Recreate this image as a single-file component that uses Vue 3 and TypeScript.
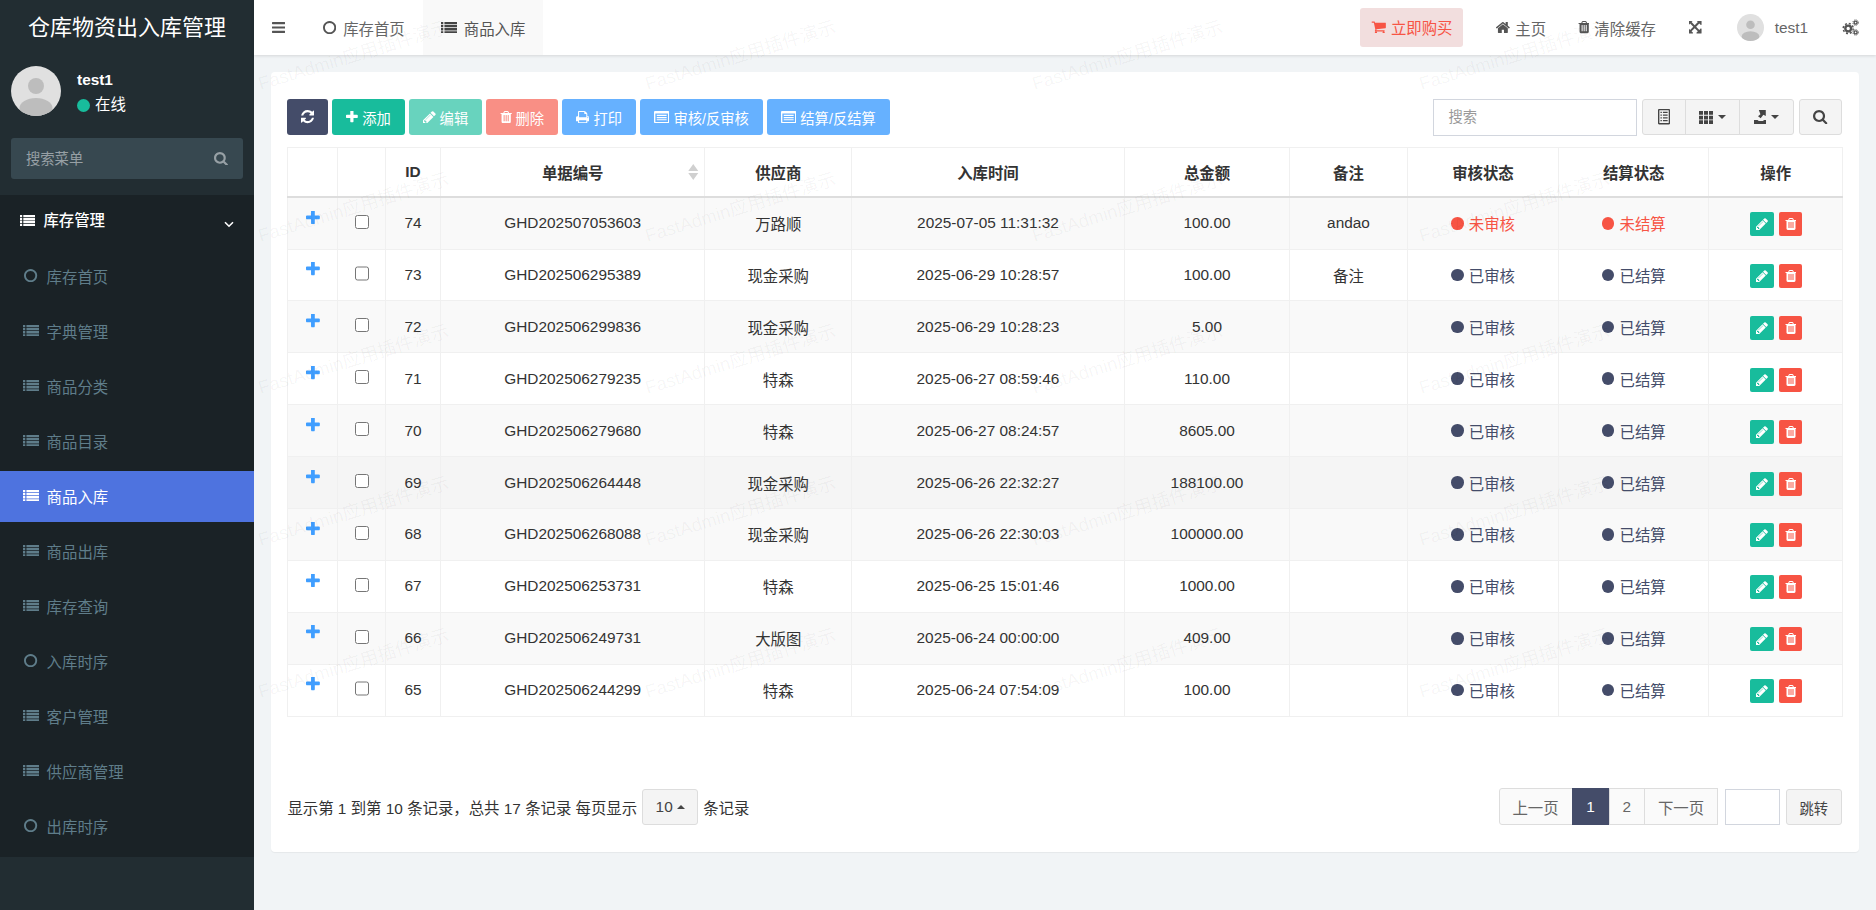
<script setup lang="ts">
import { h } from "vue";

type IconDef = { vb: [number, number, number, number]; d: string };

const ICONS: Record<string, IconDef> = {
  bars: { vb: [128, 256, 1536, 1280], d: "M1664 1344v128q0 26-19 45t-45 19h-1408q-26 0-45-19t-19-45v-128q0-26 19-45t45-19h1408q26 0 45 19t19 45zm0-512v128q0 26-19 45t-45 19h-1408q-26 0-45-19t-19-45v-128q0-26 19-45t45-19h1408q26 0 45 19t19 45zm0-512v128q0 26-19 45t-45 19h-1408q-26 0-45-19t-19-45v-128q0-26 19-45t45-19h1408q26 0 45 19t19 45z" },
  circle: { vb: [128, 128, 1536, 1536], d: "M896 352q-148 0-273 73t-198 198-73 273 73 273 198 198 273 73 273-73 198-198 73-273-73-273-198-198-273-73zm768 544q0 209-103 385.5t-279.5 279.5-385.5 103-385.5-103-279.5-279.5-103-385.5 103-385.5 279.5-279.5 385.5-103 385.5 103 279.5 279.5 103 385.5z" },
  list: { vb: [0, 256, 1792, 1280], d: "M0 256h256v256H0zM384 256h1408v256H384zM0 597h256v256H0zM384 597h1408v256H384zM0 939h256v256H0zM384 939h1408v256H384zM0 1280h256v256H0zM384 1280h1408v256H384z" },
  plus: { vb: [192, 192, 1408, 1408], d: "M1600 736v192q0 40-28 68t-68 28h-416v416q0 40-28 68t-68 28h-192q-40 0-68-28t-28-68v-416h-416q-40 0-68-28t-28-68v-192q0-40 28-68t68-28h416v-416q0-40 28-68t68-28h192q40 0 68 28t28 68v416h416q40 0 68 28t28 68z" },
  trash: { vb: [128, 128, 1408, 1536], d: "M704 1376v-704q0-14-9-23t-23-9h-64q-14 0-23 9t-9 23v704q0 14 9 23t23 9h64q14 0 23-9t9-23zm256 0v-704q0-14-9-23t-23-9h-64q-14 0-23 9t-9 23v704q0 14 9 23t23 9h64q14 0 23-9t9-23zm256 0v-704q0-14-9-23t-23-9h-64q-14 0-23 9t-9 23v704q0 14 9 23t23 9h64q14 0 23-9t9-23zm-544-992h448l-48-117q-7-9-17-11h-317q-10 2-17 11zm928 32v64q0 14-9 23t-23 9h-96v948q0 83-47 143.5t-113 60.5h-832q-66 0-113-58.5t-47-141.5v-952h-96q-14 0-23-9t-9-23v-64q0-14 9-23t23-9h309l70-167q15-37 54-63t79-26h320q40 0 79 26t54 63l70 167h309q14 0 23 9t9 23z" },
  pencil: { vb: [128, 128, 1536, 1536], d: "M491 1536l91-91-235-235-91 91v107h128v128h107zm523-928q0-22-22-22-10 0-17 7l-542 542q-7 7-7 17 0 22 22 22 10 0 17-7l542-542q7-7 7-17zm-54-192l416 416-832 832h-416v-416zm683 96q0 53-37 90l-166 166-416-416 166-165q36-38 90-38 53 0 91 38l235 234q37 39 37 91z" },
  search: { vb: [64, 128, 1664, 1664], d: "M1216 832q0-185-131.5-316.5t-316.5-131.5-316.5 131.5-131.5 316.5 131.5 316.5 316.5 131.5 316.5-131.5 131.5-316.5zm512 832q0 52-38 90t-90 38q-54 0-90-38l-343-342q-179 124-399 124-143 0-273.5-55.5t-225-150-150-225-55.5-273.5 55.5-273.5 150-225 225-150 273.5-55.5 273.5 55.5 225 150 150 225 55.5 273.5q0 220-124 399l343 343q37 37 37 90z" },
  refresh: { vb: [128, 128, 1536, 1536], d: "M1639 1056q0 5-1 7-64 268-268 434.5t-478 166.5q-146 0-282.5-55t-243.5-157l-129 129q-19 19-45 19t-45-19-19-45v-448q0-26 19-45t45-19h448q26 0 45 19t19 45-19 45l-137 137q71 66 161 102t187 36q134 0 250-65t186-179q11-17 53-117 8-23 30-23h192q13 0 22.5 9.5t9.5 22.5zm25-800v448q0 26-19 45t-45 19h-448q-26 0-45-19t-19-45 19-45l138-138q-148-137-349-137-134 0-250 65t-186 179q-11 17-53 117-8 23-30 23h-199q-13 0-22.5-9.5t-9.5-22.5v-7q65-268 270-434.5t480-166.5q146 0 284 55.5t245 156.5l130-129q19-19 45-19t45 19 19 45z" },
  print: { vb: [64, 128, 1664, 1536], d: "M448 1536h896v-256h-896v256zm0-640h896v-384h-160q-40 0-68-28t-28-68v-160h-640v640zm1152 64q0-26-19-45t-45-19-45 19-19 45 19 45 45 19 45-19 19-45zm128 0v416q0 13-9.5 22.5t-22.5 9.5h-224v160q0 40-28 68t-68 28h-960q-40 0-68-28t-28-68v-160h-224q-13 0-22.5-9.5t-9.5-22.5v-416q0-79 56.5-135.5t135.5-56.5h64v-544q0-40 28-68t68-28h672q40 0 88 20t76 48l152 152q28 28 48 76t20 88v256h64q79 0 135.5 56.5t56.5 135.5z" },
  cart: { vb: [0, 192, 1728, 1472], d: "M704 1536q0 52-38 90t-90 38-90-38-38-90 38-90 90-38 90 38 38 90zm896 0q0 52-38 90t-90 38-90-38-38-90 38-90 90-38 90 38 38 90zm128-1088v512q0 24-16.5 42.5t-40.5 21.5l-1044 122q13 60 13 70 0 16-24 64h920q26 0 45 19t19 45-19 45-45 19h-1024q-26 0-45-19t-19-45q0-11 8-31.5t16-36 21.5-40 15.5-29.5l-177-823h-204q-26 0-45-19t-19-45 19-45 45-19h256q16 0 28.5 6.5t19.5 15.5 13 24.5 8 26 5.5 29.5 4.5 26h1201q26 0 45 19t19 45z" },
  home: { vb: [96, 256, 1600, 1280], d: "M1472 992v480q0 26-19 45t-45 19h-384v-384h-256v384h-384q-26 0-45-19t-19-45v-480q0-1 .5-3t.5-3l575-474 575 474q1 2 1 6zm223-69l-62 74q-8 9-21 11h-3q-13 0-21-7l-692-577-692 577q-12 8-24 7-13-2-21-11l-62-74q-8-10-7-23.5t11-21.5l719-599q32-26 76-26t76 26l244 204v-195q0-14 9-23t23-9h192q14 0 23 9t9 23v408l219 182q10 8 11 21.5t-7 23.5z" },
  expand: { vb: [128, 128, 1536, 1536], d: "M1283 413l-355 355 355 355 144-144q29-31 70-14 39 17 39 59v448q0 26-19 45t-45 19h-448q-42 0-59-40-17-39 14-69l144-144-355-355-355 355 144 144q31 30 14 69-17 40-59 40h-448q-26 0-45-19t-19-45v-448q0-42 40-59 39-17 69 14l144 144 355-355-355-355-144 144q-19 19-45 19-12 0-24-5-40-17-40-59v-448q0-26 19-45t45-19h448q42 0 59 40 17 39-14 69l-144 144 355 355 355-355-144-144q-31-30-14-69 17-40 59-40h448q26 0 45 19t19 45v448q0 42-39 59-13 5-25 5-26 0-45-19z" },
  listAlt: { vb: [0, 192, 1792, 1408], d: "M128 192h1536q53 0 90.5 37.5t37.5 90.5v1152q0 53-37.5 90.5t-90.5 37.5H128q-53 0-90.5-37.5T0 1472V320q0-53 37.5-90.5T128 192zM160 480v960q0 13 9.5 22.5t22.5 9.5h1408q13 0 22.5-9.5t9.5-22.5V480zM320 640h1152v128H320zM320 896h1152v128H320zM320 1152h1152v128H320z" },
  sheet: { vb: [192, 0, 1408, 1792], d: "M320 0h1152q53 0 90.5 37.5t37.5 90.5v1536q0 53-37.5 90.5t-90.5 37.5H320q-53 0-90.5-37.5T192 1664V128q0-53 37.5-90.5T320 0zM352 160v1472h1088V160zM480 320h160v160H480zM768 320h544v160H768zM480 640h160v160H480zM768 640h544v160H768zM480 960h160v160H480zM768 960h544v160H768zM480 1280h160v160H480zM768 1280h544v160H768z" },
  th: { vb: [0, 0, 1792, 1664], d: "M0 0h512v480H0zM640 0h512v480H640zM1280 0h512v480h-512zM0 592h512v480H0zM640 592h512v480H640zM1280 592h512v480h-512zM0 1184h512v480H0zM640 1184h512v480H640zM1280 1184h512v480h-512z" },
  exportBox: { vb: [128, 0, 1536, 1664], d: "M704 0h832v704l-288-128-320 416-320-240 288-256zM128 1184h416l160 128h480l160-128h320v480H128z" },
};

const Icon = (props: { name: string; size?: number }) => {
  const def = ICONS[props.name];
  const s = props.size ?? 15;
  return h(
    "svg",
    {
      viewBox: def.vb.join(" "),
      fill: "currentColor",
      "fill-rule": "evenodd",
      style: { width: `${(def.vb[2] / 1792) * s}px`, height: `${(def.vb[3] / 1792) * s}px`, flexShrink: 0 },
    },
    [h("path", { d: def.d })],
  );
};
Icon.props = ["name", "size"];

const menu = [
  { label: "库存首页", icon: "circle" },
  { label: "字典管理", icon: "list" },
  { label: "商品分类", icon: "list" },
  { label: "商品目录", icon: "list" },
  { label: "商品入库", icon: "list", active: true },
  { label: "商品出库", icon: "list" },
  { label: "库存查询", icon: "list" },
  { label: "入库时序", icon: "circle" },
  { label: "客户管理", icon: "list" },
  { label: "供应商管理", icon: "list" },
  { label: "出库时序", icon: "circle" },
];

const rows = [
  { id: 74, no: "GHD202507053603", vendor: "万路顺", time: "2025-07-05 11:31:32", total: "100.00", note: "andao", done: false },
  { id: 73, no: "GHD202506295389", vendor: "现金采购", time: "2025-06-29 10:28:57", total: "100.00", note: "备注", done: true },
  { id: 72, no: "GHD202506299836", vendor: "现金采购", time: "2025-06-29 10:28:23", total: "5.00", note: "", done: true },
  { id: 71, no: "GHD202506279235", vendor: "特森", time: "2025-06-27 08:59:46", total: "110.00", note: "", done: true },
  { id: 70, no: "GHD202506279680", vendor: "特森", time: "2025-06-27 08:24:57", total: "8605.00", note: "", done: true },
  { id: 69, no: "GHD202506264448", vendor: "现金采购", time: "2025-06-26 22:32:27", total: "188100.00", note: "", done: true, hover: true },
  { id: 68, no: "GHD202506268088", vendor: "现金采购", time: "2025-06-26 22:30:03", total: "100000.00", note: "", done: true },
  { id: 67, no: "GHD202506253731", vendor: "特森", time: "2025-06-25 15:01:46", total: "1000.00", note: "", done: true },
  { id: 66, no: "GHD202506249731", vendor: "大版图", time: "2025-06-24 00:00:00", total: "409.00", note: "", done: true },
  { id: 65, no: "GHD202506244299", vendor: "特森", time: "2025-06-24 07:54:09", total: "100.00", note: "", done: true },
];

const columns = [50, 47.6, 55, 264.5, 146.5, 273, 165, 118, 151, 150.5, 133.5];

// watermark tiles repeat over the content frame
const marks: { x: number; y: number }[] = [];
for (let r = 0; r < 5; r++) {
  for (let c = 0; c < 4; c++) {
    marks.push({ x: 8 + c * 387, y: 73 + r * 152 });
  }
}
</script>

<template>
  <div class="layout">
    <aside class="sidebar">
      <div class="logo">仓库物资出入库管理</div>
      <div class="user-panel">
        <svg class="avatar-big" viewBox="0 0 100 100">
          <defs>
            <clipPath id="avatar-clip"><circle cx="50" cy="50" r="50" /></clipPath>
          </defs>
          <g clip-path="url(#avatar-clip)">
            <rect width="100" height="100" fill="#e0e0e0" />
            <circle cx="50" cy="40" r="16" fill="#bdbdbd" />
            <ellipse cx="50" cy="84" rx="33" ry="20" fill="#bdbdbd" />
          </g>
        </svg>
        <div class="user-info">
          <div class="user-name">test1</div>
          <div class="user-status"><span class="dot"></span>在线</div>
        </div>
      </div>
      <div class="side-search">
        <input type="text" placeholder="搜索菜单" />
        <Icon name="search" :size="15" />
      </div>
      <nav class="menu">
        <div class="menu-head">
          <Icon name="list" :size="15.4" />
          <span class="menu-head-text">库存管理</span>
          <svg class="chevron" viewBox="0 0 10 7"><path d="M1 1.2 5 5.2 9 1.2" fill="none" stroke="currentColor" stroke-width="1.6" /></svg>
        </div>
        <a v-for="item in menu" :key="item.label" class="menu-item" :class="{ active: item.active }">
          <span class="menu-icon"><Icon :name="item.icon" :size="item.icon === 'list' ? 16 : 15.4" /></span>
          {{ item.label }}
        </a>
      </nav>
    </aside>

    <div class="main">
      <header class="topbar">
        <div class="toggle"><Icon name="bars" :size="15.4" /></div>
        <div class="tab"><Icon name="circle" :size="15.4" />库存首页</div>
        <div class="tab tab-active"><Icon name="list" :size="16" />商品入库</div>
        <div class="top-right">
          <div class="buy"><Icon name="cart" :size="15.4" />立即购买</div>
          <div class="top-link link-home"><Icon name="home" :size="15.4" />主页</div>
          <div class="top-link link-clear"><Icon name="trash" :size="14.4" />清除缓存</div>
          <div class="top-link link-full"><Icon name="expand" :size="16" /></div>
          <svg class="avatar-small" viewBox="0 0 100 100">
            <g clip-path="url(#avatar-clip)">
              <rect width="100" height="100" fill="#e0e0e0" />
              <circle cx="50" cy="40" r="16" fill="#bdbdbd" />
              <ellipse cx="50" cy="84" rx="33" ry="20" fill="#bdbdbd" />
            </g>
          </svg>
          <span class="top-user">test1</span>
          <svg class="gears" viewBox="0 0 17 17" fill="none" stroke="currentColor">
            <circle cx="6.2" cy="9.5" r="2.9" stroke-width="2.4" />
            <circle cx="6.2" cy="9.5" r="5" stroke-width="1.5" stroke-dasharray="2 1.93" />
            <circle cx="13.6" cy="3.6" r="1.5" stroke-width="1.4" />
            <circle cx="13.6" cy="3.6" r="2.7" stroke-width="1" stroke-dasharray="1.2 1" />
            <circle cx="13.6" cy="13.4" r="1.5" stroke-width="1.4" />
            <circle cx="13.6" cy="13.4" r="2.7" stroke-width="1" stroke-dasharray="1.2 1" />
          </svg>
        </div>
      </header>

      <div class="content">
        <section class="card">
          <div class="toolbar">
            <button class="btn btn-primary btn-refresh"><Icon name="refresh" :size="15.4" /></button>
            <button class="btn btn-success"><Icon name="plus" :size="15" />添加</button>
            <button class="btn btn-success btn-off"><Icon name="pencil" :size="15" />编辑</button>
            <button class="btn btn-danger btn-off"><Icon name="trash" :size="14.4" />删除</button>
            <button class="btn btn-info"><Icon name="print" :size="14.4" />打印</button>
            <button class="btn btn-info"><Icon name="listAlt" :size="15.4" />审核/反审核</button>
            <button class="btn btn-info"><Icon name="listAlt" :size="15.4" />结算/反结算</button>
            <div class="tools-right">
              <input class="search-input" type="text" placeholder="搜索" />
              <div class="btn-group">
                <button class="tool tool-a"><Icon name="sheet" :size="15.4" /></button>
                <button class="tool tool-b"><Icon name="th" :size="14" /><i class="caret"></i></button>
                <button class="tool tool-b"><Icon name="exportBox" :size="15" /><i class="caret"></i></button>
              </div>
              <button class="tool tool-search"><Icon name="search" :size="15.4" /></button>
            </div>
          </div>

          <table class="grid">
            <colgroup>
              <col v-for="(w, i) in columns" :key="i" :style="{ width: w + 'px' }" />
            </colgroup>
            <thead>
              <tr>
                <th></th>
                <th></th>
                <th>ID</th>
                <th class="sortable">
                  单据编号
                  <svg class="sort" viewBox="0 0 10 16"><path d="M5 0 10 7H0zM5 16 0 9h10z" /></svg>
                </th>
                <th>供应商</th>
                <th>入库时间</th>
                <th>总金额</th>
                <th>备注</th>
                <th>审核状态</th>
                <th>结算状态</th>
                <th>操作</th>
              </tr>
            </thead>
            <tbody>
              <tr v-for="(row, i) in rows" :key="row.id" :class="{ odd: i % 2 === 0, hovered: row.hover }">
                <td class="cell-plus"><span class="plus"><Icon name="plus" :size="17.6" /></span></td>
                <td class="cell-check"><input type="checkbox" /></td>
                <td>{{ row.id }}</td>
                <td>{{ row.no }}</td>
                <td>{{ row.vendor }}</td>
                <td>{{ row.time }}</td>
                <td>{{ row.total }}</td>
                <td>{{ row.note }}</td>
                <td>
                  <span class="state" :class="{ pending: !row.done }"><i></i>{{ row.done ? "已审核" : "未审核" }}</span>
                </td>
                <td>
                  <span class="state" :class="{ pending: !row.done }"><i></i>{{ row.done ? "已结算" : "未结算" }}</span>
                </td>
                <td>
                  <div class="ops">
                    <span class="op op-edit"><Icon name="pencil" :size="14" /></span>
                    <span class="op op-del"><Icon name="trash" :size="14" /></span>
                  </div>
                </td>
              </tr>
            </tbody>
          </table>

          <div class="pager-bar">
            <div class="pager-info">
              <span>显示第 1 到第 10 条记录，总共 17 条记录 每页显示</span>
              <span class="page-size">10<i class="caret-up"></i></span>
              <span>条记录</span>
            </div>
            <div class="pager-right">
              <div class="pages">
                <a class="page page-wide">上一页</a>
                <a class="page page-on">1</a>
                <a class="page page-num">2</a>
                <a class="page page-wide">下一页</a>
              </div>
              <input class="jump-input" type="text" />
              <button class="jump-btn">跳转</button>
            </div>
          </div>
        </section>
      </div>

      <div class="marks">
        <span v-for="(m, i) in marks" :key="i" class="mark" :style="{ left: m.x + 'px', top: m.y + 'px' }">FastAdmin应用插件演示</span>
      </div>
    </div>
  </div>
</template>

<style>
html,
body {
  margin: 0;
  height: 100%;
  background: #f1f4f6;
}
</style>

<style scoped>
.layout {
  display: flex;
  height: 100vh;
  overflow: hidden;
  font-family: "Liberation Sans", "Noto Sans CJK SC", sans-serif;
  font-size: 15.4px;
  color: #333;
}

/* sidebar */
.sidebar {
  width: 254px;
  flex-shrink: 0;
  display: flex;
  flex-direction: column;
  background: #222d32;
}

.logo {
  height: 55px;
  line-height: 55px;
  text-align: center;
  color: #fff;
  font-size: 22px;
}

.user-panel {
  display: flex;
  padding: 11px 11px 0;
  height: 72px;
}

.avatar-big {
  width: 50px;
  height: 50px;
}

.user-info {
  margin-left: 16px;
  color: #fff;
}

.user-name {
  font-weight: 700;
  line-height: 20px;
  margin-top: 4px;
}

.user-status {
  display: flex;
  align-items: center;
  line-height: 20px;
  margin-top: 5px;
}

.dot {
  width: 13px;
  height: 13px;
  border-radius: 50%;
  background: #18bc9c;
  margin-right: 5px;
}

.side-search {
  margin: 0 11px;
  height: 41px;
  border-radius: 3px;
  background: #374850;
  display: flex;
  align-items: center;
  padding: 0 15px;
  color: #97a0a5;
}

.side-search input {
  flex: 1;
  min-width: 0;
  border: 0;
  outline: 0;
  background: transparent;
  font: inherit;
  font-size: 14.3px;
  padding: 0;
  color: #ccc;
}

.side-search input::placeholder {
  color: #97a0a5;
  opacity: 1;
}

.menu {
  margin-top: 16px;
  background: #1a2226;
  height: 662px;
}

.menu-head {
  height: 56px;
  display: flex;
  align-items: flex-start;
  padding: 17px 0 0 20px;
  box-sizing: border-box;
  color: #fff;
  line-height: 18px;
  font-weight: 500;
}

.menu-head svg:first-child {
  margin-top: 3px;
}

.menu-head-text {
  margin-left: 8px;
}

.chevron {
  position: absolute;
  left: 224px;
  top: 221px;
  width: 10px;
  height: 7px;
  color: #fff;
}

.menu-item {
  display: flex;
  align-items: center;
  height: 51px;
  box-sizing: border-box;
  padding-bottom: 2px;
  margin-bottom: 4px;
  padding-left: 20px;
  color: #5f7d8a;
}

.menu-item.active {
  background: #4e73df;
  color: #fff;
}

.menu-icon {
  width: 22px;
  margin-right: 4.6px;
  display: inline-flex;
  justify-content: center;
}

/* top bar */
.main {
  flex: 1;
  min-width: 0;
  display: flex;
  flex-direction: column;
  position: relative;
}

.topbar {
  height: 55px;
  flex-shrink: 0;
  display: flex;
  align-items: center;
  background: #fff;
  color: #666;
  box-shadow: 0 1px 3px rgba(0, 0, 0, 0.12);
  position: relative;
}

.toggle {
  width: 51px;
  padding-left: 18px;
  box-sizing: border-box;
  color: #555;
  display: flex;
}

.tab {
  height: 55px;
  display: flex;
  align-items: center;
  gap: 7px;
  padding: 0 18px;
}

.tab svg {
  color: #555;
}

.tab-active {
  background: #f9f9f9;
  color: #555;
}

.tab-active svg {
  color: #444;
}

.top-right {
  margin-left: auto;
  display: flex;
  align-items: center;
  padding-right: 17px;
}

.buy {
  display: flex;
  align-items: center;
  gap: 5px;
  height: 39px;
  padding: 0 11px;
  margin-top: -1px;
  border-radius: 3px;
  background: #f2dede;
  color: #f75444;
}

.top-link {
  display: flex;
  align-items: center;
  gap: 5px;
  color: #666;
}

.top-link svg {
  color: #555;
}

.link-home {
  margin-left: 33px;
}

.link-clear {
  margin-left: 32px;
}

.link-full {
  margin-left: 33px;
}

.avatar-small {
  width: 27px;
  height: 27px;
  margin-left: 34px;
}

.top-user {
  margin-left: 11px;
  color: #666;
}

.gears {
  width: 17px;
  height: 17px;
  margin-left: 34px;
  color: #555;
}

/* page body */
.content {
  flex: 1;
  padding: 17px 17.5px 0 17px;
  min-height: 0;
}

.card {
  height: 780px;
  box-sizing: border-box;
  padding: 27px 16.5px 27px 16.4px;
  background: #fff;
  border-radius: 4px;
  box-shadow: 0 1px 1px rgba(0, 0, 0, 0.05);
  display: flex;
  flex-direction: column;
}

.toolbar {
  display: flex;
  align-items: center;
  gap: 4px;
  height: 36px;
  margin-bottom: 12px;
}

.btn {
  display: inline-flex;
  align-items: center;
  gap: 4px;
  height: 36px;
  padding: 0 14px;
  border: 0;
  border-radius: 3px;
  color: #fff;
  font: inherit;
  font-size: 14.3px;
}

.btn-primary {
  background: #444c69;
}

.btn-refresh {
  width: 41px;
  justify-content: center;
  padding: 0;
}

.btn-success {
  background: #18bc9c;
}

.btn-danger {
  background: #f75444;
}

.btn-off {
  opacity: 0.65;
}

.btn-info {
  background: #66b1ff;
}

.tools-right {
  margin-left: auto;
  display: flex;
  align-items: center;
  gap: 5px;
}

.search-input {
  width: 204px;
  height: 37px;
  box-sizing: border-box;
  border: 1px solid #d2d6de;
  outline: 0;
  padding: 0 14px;
  font: inherit;
  font-size: 14.3px;
  background: transparent;
}

.search-input::placeholder {
  color: #999;
  opacity: 1;
}

.btn-group {
  display: flex;
}

.tool {
  height: 36px;
  display: inline-flex;
  align-items: center;
  justify-content: center;
  gap: 5px;
  background: #f4f4f4;
  border: 1px solid #ddd;
  color: #444;
  padding: 0;
  font: inherit;
}

.tool-a {
  width: 43.6px;
  border-radius: 3px 0 0 3px;
}

.tool-b {
  width: 55px;
  margin-left: -1px;
}

.tool-b:last-child {
  border-radius: 0 3px 3px 0;
}

.tool-search {
  width: 43px;
  border-radius: 3px;
}

.caret {
  width: 0;
  height: 0;
  border-top: 4.4px solid #444;
  border-left: 4.4px solid transparent;
  border-right: 4.4px solid transparent;
}

/* table */
.grid {
  width: 100%;
  border-collapse: collapse;
  table-layout: fixed;
  text-align: center;
}

.grid th,
.grid td {
  border: 1px solid #f0f0f0;
  padding: 0;
  box-sizing: border-box;
}

.grid th {
  height: 49.7px;
  border-bottom: 2px solid #ddd;
  font-weight: 700;
  color: #333;
}

.grid td {
  height: 51.9px;
  color: #333;
}

.grid tr.odd td {
  background: #f9f9f9;
}

.grid tr.hovered td {
  background: #f5f5f5;
}

.sortable {
  position: relative;
}

.sort {
  position: absolute;
  right: 5.5px;
  top: 16px;
  width: 10.5px;
  height: 16px;
  fill: #d0d0d0;
}

.grid .cell-plus {
  padding-bottom: 8px;
}

.plus {
  display: inline-flex;
  color: #409eff;
}

.grid .cell-check {
  padding-bottom: 5px;
}

.cell-check input {
  width: 14.3px;
  height: 14.3px;
  margin: 0;
  vertical-align: middle;
}

.state {
  display: inline-flex;
  align-items: center;
  gap: 5px;
  color: #444c69;
}

.state i {
  width: 12.7px;
  height: 12.7px;
  border-radius: 50%;
  background: currentColor;
}

.state.pending {
  color: #f75444;
}

.ops {
  display: flex;
  justify-content: center;
  gap: 5px;
  padding-top: 2px;
}

.op {
  height: 24px;
  width: 24px;
  display: inline-flex;
  align-items: center;
  justify-content: center;
  border-radius: 2px;
  color: #fff;
}

.op-edit {
  background: #18bc9c;
}

.op-del {
  width: 23px;
  background: #f75444;
}

/* pagination */
.pager-bar {
  margin-top: auto;
  display: flex;
  align-items: center;
  justify-content: space-between;
}

.pager-info {
  display: flex;
  align-items: center;
  color: #333;
}

.page-size {
  display: inline-flex;
  align-items: center;
  justify-content: center;
  gap: 4px;
  width: 56px;
  height: 36px;
  box-sizing: border-box;
  margin: 0 5px;
  background: #f4f4f4;
  border: 1px solid #ddd;
  border-radius: 3px;
  color: #444;
}

.caret-up {
  width: 0;
  height: 0;
  border-bottom: 4.4px solid #444;
  border-left: 4.4px solid transparent;
  border-right: 4.4px solid transparent;
}

.pager-right {
  display: flex;
  align-items: center;
}

.pages {
  display: flex;
}

.page {
  height: 37px;
  box-sizing: border-box;
  display: flex;
  align-items: center;
  justify-content: center;
  background: #fafafa;
  border: 1px solid #ddd;
  margin-left: -1px;
  color: #666;
}

.page-wide {
  width: 74px;
}

.pages .page:first-child {
  border-radius: 3px 0 0 3px;
  margin-left: 0;
}

.page-on {
  width: 38px;
  background: #444c69;
  border-color: #444c69;
  color: #fff;
}

.page-num {
  width: 36.5px;
}

.jump-input {
  width: 55px;
  height: 36px;
  box-sizing: border-box;
  border: 1px solid #d2d6de;
  outline: 0;
  margin-left: 6.5px;
  padding: 0;
  background: transparent;
}

.jump-btn {
  width: 56.5px;
  height: 36px;
  margin-left: 6px;
  margin-top: 1px;
  box-sizing: border-box;
  background: #f4f4f4;
  border: 1px solid #ddd;
  border-radius: 3px;
  color: #444;
  padding: 0;
  font: inherit;
  font-size: 14.3px;
}

/* watermark */
.marks {
  position: absolute;
  inset: 0;
  overflow: hidden;
  pointer-events: none;
}

.mark {
  position: absolute;
  white-space: nowrap;
  line-height: 22px;
  font-size: 18.4px;
  color: rgba(0, 0, 0, 0.045);
  transform: rotate(-17deg);
  transform-origin: 0 100%;
}
</style>
